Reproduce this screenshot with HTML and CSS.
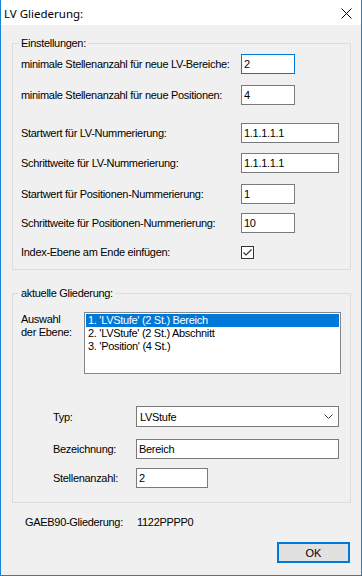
FILE: index.html
```html
<!DOCTYPE html>
<html lang="de">
<head>
<meta charset="utf-8">
<title>LV Gliederung</title>
<link rel="stylesheet" href="styles.css">
</head>
<body>
<div class="window">
  <div class="titlebar">
    <span class="title">LV Gliederung:</span>
    <svg class="close" width="11" height="11" viewBox="0 0 11 11"><path d="M0.5 0.5 L10.5 10.5 M10.5 0.5 L0.5 10.5" stroke="#000" stroke-width="1" fill="none"/></svg>
  </div>
  <div class="client">
    <div class="group g1">
      <div class="legend">Einstellungen:</div>
      <div class="row r1"><span class="lbl">minimale Stellenanzahl für neue LV-Bereiche:</span><input class="box short focus" value="2"></div>
      <div class="row r2"><span class="lbl">minimale Stellenanzahl für neue Positionen:</span><input class="box short" value="4"></div>
      <div class="row r3"><span class="lbl">Startwert für LV-Nummerierung:</span><input class="box long" value="1.1.1.1.1"></div>
      <div class="row r4"><span class="lbl">Schrittweite für LV-Nummerierung:</span><input class="box long" value="1.1.1.1.1"></div>
      <div class="row r5"><span class="lbl">Startwert für Positionen-Nummerierung:</span><input class="box short" value="1"></div>
      <div class="row r6"><span class="lbl">Schrittweite für Positionen-Nummerierung:</span><input class="box short" value="10"></div>
      <div class="row r7"><span class="lbl">Index-Ebene am Ende einfügen:</span>
        <span class="check"><svg width="11" height="11" viewBox="0 0 11 11"><path d="M1.5 5.5 L4 8 L9.5 2.5" stroke="#333" stroke-width="1.2" fill="none"/></svg></span>
      </div>
    </div>

    <div class="group g2">
      <div class="legend">aktuelle Gliederung:</div>
      <div class="listrow">
        <span class="lbl2">Auswahl<br>der Ebene:</span>
        <ul class="listbox">
          <li class="sel">1. 'LVStufe' (2 St.) Bereich</li>
          <li>2. 'LVStufe' (2 St.) Abschnitt</li>
          <li>3. 'Position' (4 St.)</li>
        </ul>
      </div>
      <div class="frow f1"><span class="flbl">Typ:</span>
        <div class="select"><span>LVStufe</span><svg width="9" height="5" viewBox="0 0 9 5"><path d="M0.5 0.5 L4.5 4.5 L8.5 0.5" stroke="#444" stroke-width="1" fill="none"/></svg></div>
      </div>
      <div class="frow f2"><span class="flbl">Bezeichnung:</span><input class="box wide" value="Bereich"></div>
      <div class="frow f3"><span class="flbl">Stellenanzahl:</span><input class="box mid" value="2"></div>
    </div>

    <div class="gaeb"><span class="glbl">GAEB90-Gliederung:</span><span>1122PPPP0</span></div>
    <div class="actions"><button class="ok">OK</button></div>
  </div>
</div>
</body>
</html>
```

FILE: styles.css
```css
* { box-sizing: border-box; }
html, body { margin: 0; padding: 0; }
body {
  font-family: "Liberation Sans", Arial, sans-serif;
  font-size: 11px;
  letter-spacing: -0.3px;
  color: #000;
  background: #fff;
}
.window {
  width: 362px;
  height: 576px;
  border: 1px solid #1883d7;
  border-top: none;
  background: #f0f0f0;
  display: flex;
  flex-direction: column;
}
.titlebar {
  height: 25px;
  background: #fff;
  display: flex;
  align-items: center;
  justify-content: space-between;
  padding: 0 9px 0 3px;
  flex: none;
}
.title {
  font-family: "Noto Sans", "Open Sans", sans-serif;
  font-size: 11.5px;
  letter-spacing: 0;
  color: #000;
  margin-top: 1px;
}
.close { margin-top: 1px; }
.client {
  flex: 1;
  display: flex;
  flex-direction: column;
}
.group {
  margin-left: 11px;
  width: 339px;
  border: 1px solid #dcdcdc;
  padding: 0 0 0 8px;
  display: flex;
  flex-direction: column;
}
.g1 { margin-top: 18px; padding-bottom: 7px; }
.g2 { margin-top: 23px; padding-bottom: 14px; }
.legend {
  margin-top: -7px;
  margin-left: -2px;
  height: 13px;
  line-height: 13px;
  padding: 0 2px;
  background: #f0f0f0;
  align-self: flex-start;
}
.row {
  display: flex;
  align-items: center;
  height: 20px;
}
.lbl { width: 220px; flex: none; white-space: nowrap; }
.r1 { margin-top: 4px; }
.r2 { margin-top: 11px; }
.r3 { margin-top: 18px; }
.r4 { margin-top: 10px; }
.r5 { margin-top: 11px; }
.r6 { margin-top: 9px; }
.r7 { margin-top: 9px; }
.box {
  appearance: none;
  -webkit-appearance: none;
  height: 20px;
  border: 1px solid #7a7a7a;
  background: #fff;
  font: inherit;
  letter-spacing: inherit;
  color: #000;
  padding: 0 0 0 2px;
  margin: 0;
  outline: none;
  border-radius: 0;
}
.short { width: 54px; }
.long { width: 98px; }
.wide { width: 203px; }
.mid { width: 72px; }
.focus { border-color: #0078d7; }
.check {
  width: 13px;
  height: 13px;
  border: 1px solid #333;
  background: #fff;
  display: flex;
  align-items: center;
  justify-content: center;
}
.listrow {
  display: flex;
  align-items: flex-start;
  margin-top: 12px;
}
.lbl2 {
  width: 63px;
  flex: none;
  line-height: 13px;
  padding-top: 1px;
}
.listbox {
  list-style: none;
  margin: 0;
  width: 257px;
  height: 62px;
  border: 1px solid #828790;
  background: #fff;
  padding: 1px;
}
.listbox li {
  height: 13px;
  line-height: 13px;
  padding-left: 2px;
  white-space: nowrap;
}
.listbox li.sel { background: #0078d7; color: #fff; }
.frow {
  display: flex;
  align-items: center;
  padding-left: 32px;
}
.flbl { width: 83px; flex: none; }
.f1 { margin-top: 32px; }
.f2 { margin-top: 12px; }
.f3 { margin-top: 9px; }
.select {
  width: 203px;
  height: 21px;
  border: 1px solid #7a7a7a;
  background: #fff;
  display: flex;
  align-items: center;
  justify-content: space-between;
  padding: 0 5px 0 3px;
}
.gaeb {
  margin-top: 13px;
  padding-left: 24px;
  height: 13px;
  line-height: 13px;
  display: flex;
}
.glbl { width: 112px; flex: none; }
.actions {
  display: flex;
  justify-content: flex-end;
  padding-right: 11px;
  margin-top: 13px;
}
.ok {
  width: 73px;
  height: 21px;
  border: 2px solid #0078d7;
  background: #e1e1e1;
  font: inherit;
  letter-spacing: 0;
  color: #000;
  padding: 0;
  margin: 0;
  border-radius: 0;
}
```
